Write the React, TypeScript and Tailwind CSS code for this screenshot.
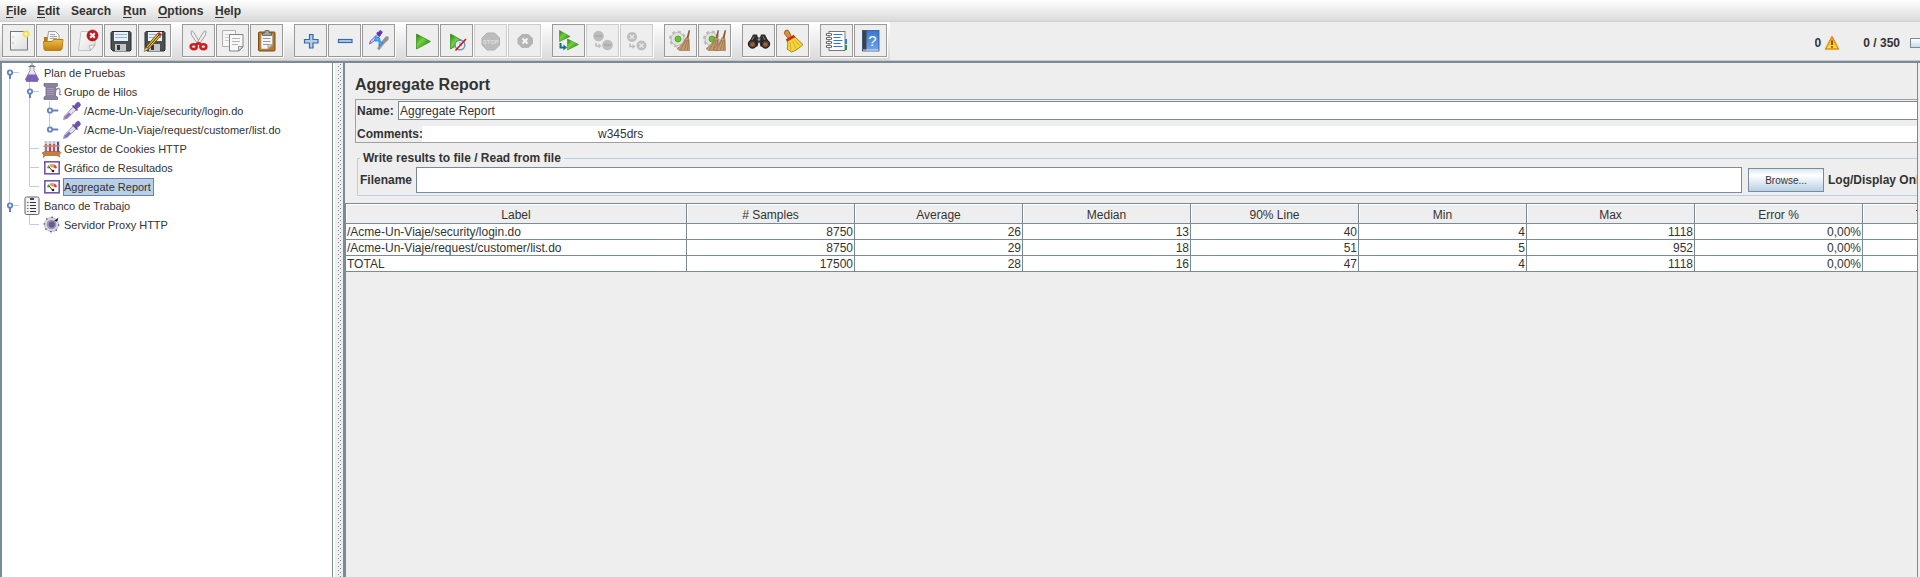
import type { ReactNode } from 'react';

function Glyph({ children }: { children: ReactNode }) {
  return (
    <svg className="block h-[25px] w-[25px]" viewBox="0 0 25 25" aria-hidden="true">
      {children}
    </svg>
  );
}

function Defs() {
  return (
    <svg width="0" height="0" className="absolute" aria-hidden="true">
      <defs>
        <linearGradient id="green" x1="0" y1="0" x2="1" y2="1">
          <stop offset="0" stopColor="#1f7d10" />
          <stop offset="0.4" stopColor="#6fd437" />
          <stop offset="1" stopColor="#176b0c" />
        </linearGradient>
        <linearGradient id="folder" x1="0" y1="0" x2="0" y2="1">
          <stop offset="0" stopColor="#f0bd43" />
          <stop offset="1" stopColor="#c17d11" />
        </linearGradient>
        <linearGradient id="page" x1="0" y1="0" x2="1" y2="1">
          <stop offset="0" stopColor="#ffffff" />
          <stop offset="1" stopColor="#dddddd" />
        </linearGradient>
        <linearGradient id="book" x1="0" y1="0" x2="0" y2="1">
          <stop offset="0" stopColor="#3a78cf" />
          <stop offset="1" stopColor="#6fa5ea" />
        </linearGradient>
        <radialGradient id="glow">
          <stop offset="0" stopColor="#fffde0" />
          <stop offset="0.5" stopColor="#f7e15a" />
          <stop offset="1" stopColor="#f7e15a" stopOpacity="0" />
        </radialGradient>
        <linearGradient id="warn" x1="0" y1="0" x2="0" y2="1">
          <stop offset="0" stopColor="#f59a1c" />
          <stop offset="1" stopColor="#ffea3a" />
        </linearGradient>
      </defs>
    </svg>
  );
}

function Floppy() {
  return (
    <>
      <path d="M4 3.5h18l1 1v17.5l-1 1H5l-2-2V4.5z" fill="#4b4f52" stroke="#2b2e30" />
      <rect x="6" y="4" width="14" height="9" fill="#e9f1f8" />
      <path d="M7 6.500h12M7 9.500h12" stroke="#8fb2d6" />
      <rect x="7" y="16" width="11" height="7" fill="#c4c6c7" />
      <rect x="9" y="17" width="3" height="5" fill="#34383a" />
    </>
  );
}

function Gear() {
  return (
    <>
      <circle cx="9.5" cy="11" r="7" fill="none" stroke="#bdbdbd" strokeWidth="3" strokeDasharray="3 2.5" />
      <circle cx="9.5" cy="11" r="6.5" fill="#e2e2e2" stroke="#b0b0b0" strokeWidth="0.8" />
      <circle cx="10" cy="11" r="3" fill="#62c62c" stroke="#4b9a20" strokeWidth="0.8" />
    </>
  );
}

function Straw() {
  return (
    <>
      <path d="M20.7 2l1.3.5-1.5 8-2-.5z" fill="#8a5a33" />
      <path d="M18 9.500l3 1 .5 12H11.500l-2.500-2c4-2 7-6 9-11z" fill="#c39a6d" stroke="#94693f" strokeWidth="0.6" />
      <path d="M18 12l-5.500 9.500M19.300 12l-3 10M20.500 12l-1 10" stroke="#8d6540" strokeWidth="0.6" />
    </>
  );
}

const icons: Record<string, ReactNode> = {
  New: (
    <>
      <rect x="4.5" y="3.5" width="17" height="18.5" fill="url(#page)" stroke="#777" />
      <path d="M7 8.500v1M7 14.500v1" stroke="#888" />
      <circle cx="20" cy="6" r="4.5" fill="url(#glow)" />
      <circle cx="20" cy="6" r="2.5" fill="none" stroke="#eedb55" />
    </>
  ),
  Open: (
    <>
      <path d="M4 12V9h4l1.500 2h12v4H4z" fill="#b8770f" />
      <path d="M8.500 3.500h7l3.500 3.500v7H7z" fill="#f6f6f6" stroke="#888" strokeWidth="0.8" />
      <path d="M10 6.500h5M10 8.500h7M10 10.500h7" stroke="#a5a5a5" />
      <path d="M3.500 13.500H12l1.500-2H23l-1 9.500-1.500 1.500H5L4 21.500z" fill="url(#folder)" stroke="#ad6f0c" strokeWidth="0.8" />
    </>
  ),
  Close: (
    <>
      <path d="M7 3.500h14V17l-4.500 5.500H4.500z" fill="url(#page)" stroke="#c4c4c4" />
      <path d="M21 17l-5.500.5 1 5z" fill="#fff" stroke="#999" strokeWidth="0.7" />
      <circle cx="18.5" cy="7.5" r="5.5" fill="#c4161c" stroke="#8f0b10" strokeWidth="0.6" />
      <path d="M16.200 5.200l4.600 4.600M20.800 5.200l-4.600 4.600" stroke="#fff" strokeWidth="2" />
    </>
  ),
  Save: <Floppy />,
  'Save As': (
    <>
      <Floppy />
      <path d="M4 19L15.500 5.500l3 2.500L7 21z" fill="#f3c32d" stroke="#4a390c" strokeWidth="0.8" />
      <path d="M5.500 20L17 6.800" stroke="#3a2b08" />
      <path d="M15.500 5.500l1.500-1.500 3 2.500-1.500 1.700z" fill="#c9262d" />
      <path d="M2 23.500l2-4.500 3 2z" fill="#e8cf9a" stroke="#5a450c" strokeWidth="0.5" />
    </>
  ),
  Cut: (
    <>
      <path d="M5 3.500c1-1 2-.5 2.500.5l7 11.500-2.500 1L5.500 7z" fill="#ededed" stroke="#8b8b8b" strokeWidth="0.8" />
      <path d="M20 3.500c-1-1-2-.5-2.500.5l-7 11.500 2.500 1L19.500 7z" fill="#ededed" stroke="#8b8b8b" strokeWidth="0.8" />
      <ellipse cx="7.7" cy="18.7" rx="3" ry="2.4" fill="none" stroke="#d8191d" strokeWidth="2.6" />
      <ellipse cx="17.300" cy="18.7" rx="3" ry="2.4" fill="none" stroke="#d8191d" strokeWidth="2.6" />
      <path d="M9.500 17l3-2 3 2" fill="none" stroke="#d8191d" strokeWidth="2.4" />
    </>
  ),
  Copy: (
    <>
      <path d="M2.500 2.500h13v16h-13z" fill="#f6f6f6" stroke="#b0b0b0" />
      <path d="M5 6.500h8M5 9.500h5M5 12.500h4" stroke="#ccc" />
      <path d="M9.500 6.500h13.500V19l-4 4H9.500z" fill="#f8f8f8" stroke="#858585" />
      <path d="M12 10.500h8M12 13.500h8M12 16.500h6" stroke="#b5b5b5" />
      <path d="M23 18.500h-4.500V23z" fill="#ddd" stroke="#858585" strokeWidth="0.8" />
    </>
  ),
  Paste: (
    <>
      <rect x="4.5" y="4" width="16.5" height="19" rx="1" fill="#b8782a" stroke="#7c4a10" />
      <path d="M7 6.500h11.500v10.500l-4 4H7z" fill="#f5f5f5" stroke="#999" strokeWidth="0.6" />
      <path d="M9 10.500h7.500M9 13.500h7.500M9 16.500h5" stroke="#999" />
      <path d="M8.500 7.500V5h2l.7-2.500h3.600L15.500 5h2v2.500z" fill="#a2a49c" stroke="#55574f" strokeWidth="0.8" />
      <path d="M18.500 16.500h-4.500V21z" fill="#ccc" stroke="#888" strokeWidth="0.6" />
    </>
  ),
  'Expand All': (
    <path d="M11.500 6.500h3.500v5h5v3.500h-5v5h-3.500v-5h-5v-3.500h5z" fill="#b3cdea" stroke="#3669a8" strokeWidth="1.2" />
  ),
  'Collapse All': (
    <rect x="6.5" y="11.5" width="13.5" height="3" fill="#b3cdea" stroke="#3669a8" strokeWidth="1.2" />
  ),
  Toggle: (
    <>
      <path d="M13 22l-1.500-1.500 3.500-6 3-3.500 2-2.500 2.500.5-.5 3-3.500 3z" fill="#8e8e8e" stroke="#a8a8a8" />
      <path d="M3.500 16l1-3L11 6.500l2.500 2L6 14.500z" fill="#d8cdf0" stroke="#6a4bb0" strokeWidth="0.9" />
      <path d="M11 4.500l3 3.500" stroke="#5d2fb0" strokeWidth="2" />
      <path d="M12 6l1.500-3c1-1 3 .5 2.500 1.500l-2 3z" fill="#6a35c0" stroke="#5d2fb0" />
      <path d="M9.500 8.500l-1 4.500h4.500v5l4-3-2.500-1-1-4z" fill="#42b4fa" stroke="#1c7fe0" strokeWidth="0.8" />
    </>
  ),
  Start: <path d="M6.500 6v15L20.500 13.500z" fill="url(#green)" stroke="#3f8f25" strokeWidth="0.8" />,
  'Start no pauses': (
    <>
      <path d="M6.500 6v15L20 13.500z" fill="url(#green)" stroke="#3f8f25" strokeWidth="0.8" />
      <circle cx="16" cy="17" r="4.8" fill="#eef4fb" stroke="#6c97b8" strokeWidth="1.4" />
      <path d="M16 14v3l2 1" fill="none" stroke="#6c97b8" />
      <path d="M11.500 22.500L22 11" stroke="#d01616" strokeWidth="1.6" />
    </>
  ),
  Stop: (
    <>
      <path d="M9 5h7.500l5 5v7l-5 5H9l-5-5v-7z" fill="#bcbcbc" stroke="#b0b0b0" />
      <text x="12.750" y="16" textAnchor="middle" fontFamily="Liberation Sans, sans-serif" fontWeight="bold" fontSize="6" fill="#dedede">STOP</text>
    </>
  ),
  Shutdown: (
    <>
      <path d="M10 6h6.500l4.500 4.500v5L16.500 20H10l-4.500-4.500v-5z" fill="#b4b4b4" />
      <path d="M10.500 10.500l5 5M15.500 10.500l-5 5" stroke="#f3f3f3" strokeWidth="2.200" />
    </>
  ),
  'Remote Start All': (
    <>
      <path d="M3.500 2.500v11L14 8.500z" fill="url(#green)" stroke="#3f8f25" strokeWidth="0.6" />
      <path d="M11.500 11v11L22.500 16.500z" fill="url(#green)" stroke="#3f8f25" strokeWidth="0.6" />
      <path d="M4.500 15v4.500h3.500" fill="none" stroke="#14717f" strokeWidth="2" />
      <path d="M7.500 16.500l3.500 3-3.500 3z" fill="#14717f" />
    </>
  ),
  'Remote Stop All': (
    <>
      <circle cx="8.5" cy="8" r="5.300" fill="#bdbdbd" />
      <path d="M5 8h7" stroke="#adadad" strokeWidth="2" />
      <circle cx="17.5" cy="17" r="5.300" fill="#bdbdbd" />
      <path d="M14 17h7" stroke="#adadad" strokeWidth="2" />
      <path d="M6 15v3h3" fill="none" stroke="#bdbdbd" strokeWidth="1.600" />
      <path d="M8.500 15.500l3 2.500-3 2.500z" fill="#bdbdbd" />
    </>
  ),
  'Remote Shutdown All': (
    <>
      <circle cx="8" cy="9" r="5" fill="#bdbdbd" />
      <path d="M6 7l4 4M10 7l-4 4" stroke="#e8e8e8" strokeWidth="1.400" />
      <circle cx="17.5" cy="17.5" r="5" fill="#bdbdbd" />
      <path d="M15.500 15.500l4 4M19.500 15.500l-4 4" stroke="#e8e8e8" strokeWidth="1.400" />
      <path d="M6 15.500v3h3" fill="none" stroke="#bdbdbd" strokeWidth="1.600" />
      <path d="M8.500 16l3 2.500-3 2.500z" fill="#bdbdbd" />
    </>
  ),
  Clear: (
    <>
      <Gear />
      <Straw />
    </>
  ),
  'Clear All': (
    <>
      <Gear />
      <g transform="translate(-5 0)">
        <Straw />
      </g>
      <g transform="translate(2 0)">
        <Straw />
      </g>
    </>
  ),
  Search: (
    <>
      <path d="M7 6.500h4l1 3h2l1-3h4l4.500 9-1 3h-8l-1-4h-1l-1 4h-8l-1-3z" fill="#2f2f2f" />
      <circle cx="6.5" cy="16" r="4.200" fill="#3a3a3a" stroke="#161616" />
      <circle cx="19.5" cy="16" r="4.200" fill="#3a3a3a" stroke="#161616" />
      <circle cx="6.5" cy="16.5" r="2.300" fill="#a65a32" />
      <circle cx="19.5" cy="16.5" r="2.300" fill="#a65a32" />
      <path d="M8 8.500l-2 3.500M17 8.500l2 3.500" stroke="#8a8a8a" />
      <circle cx="13" cy="11.5" r="1.300" fill="#9a9a9a" />
    </>
  ),
  'Reset Search': (
    <>
      <path d="M5 3c1.500-1.500 3.500-1 4 .5l2.500 5.500-3 1.500L5 6.500c-.8-1-.8-2.500 0-3.500z" fill="#d9922f" stroke="#7e4a0e" strokeWidth="0.8" />
      <path d="M7 12.500l7-4.500 9 8.500c-3.500 3.500-7 6-11.500 7.500L7 21c1-3 1-5.500 0-8.500z" fill="#f4d63a" stroke="#9c7a10" strokeWidth="0.9" />
      <path d="M6.500 12.500l8-4.500" stroke="#d02a1c" strokeWidth="2.600" />
      <path d="M10 14l1 8M12.500 13l3.500 7.500M15 12l4.500 6" stroke="#c9a425" strokeWidth="0.8" />
    </>
  ),
  'Function Helper': (
    <>
      <rect x="20" y="11" width="3" height="5" fill="#2f7fe8" />
      <rect x="20" y="17" width="3" height="5" fill="#1f9a3c" />
      <rect x="5" y="3.5" width="16" height="19" fill="#fff" stroke="#777" />
      <path d="M9.500 6.500h9M9.500 9.500h7M9.500 12.500h9M9.500 15.500h7M9.500 18.500h9" stroke="#2f74e0" />
      <path d="M3 6.500h4M3 10.500h4M3 14.500h4M3 18.500h4" stroke="#555" strokeWidth="2.400" strokeLinecap="round" />
      <path d="M3 6.500h4M3 10.500h4M3 14.500h4M3 18.500h4" stroke="#fff" strokeWidth="1.200" />
    </>
  ),
  Help: (
    <>
      <rect x="4.5" y="2.5" width="16.5" height="20.5" fill="url(#book)" stroke="#2a5597" strokeWidth="0.8" />
      <rect x="4.5" y="2.5" width="4" height="20.5" fill="#3e4247" />
      <path d="M5 22h15.500" stroke="#e8e8e8" />
      <text x="14.5" y="18" textAnchor="middle" fontFamily="Liberation Sans, sans-serif" fontSize="15" fill="#fff">?</text>
    </>
  ),
};

const toolGroups: string[][] = [
  ['New', 'Open', 'Close', 'Save', 'Save As'],
  ['Cut', 'Copy', 'Paste'],
  ['Expand All', 'Collapse All', 'Toggle'],
  ['Start', 'Start no pauses', 'Stop', 'Shutdown'],
  ['Remote Start All', 'Remote Stop All', 'Remote Shutdown All'],
  ['Clear', 'Clear All'],
  ['Search', 'Reset Search'],
  ['Function Helper', 'Help'],
];
const disabledTools = ['Stop', 'Shutdown', 'Remote Stop All', 'Remote Shutdown All'];

function ToolButton({ name }: { name: string }) {
  const disabled = disabledTools.includes(name);
  return (
    <button
      type="button"
      aria-label={name}
      disabled={disabled}
      className="flex h-[34px] w-[34px] items-center justify-center border-r border-b border-white bg-white"
    >
      <span
        className={
          'flex h-[33px] w-[33px] items-center justify-center border bg-[#eeeeee] ' +
          (disabled ? 'border-[#cccccc]' : 'border-[#999999]')
        }
      >
        <Glyph>{icons[name]}</Glyph>
      </span>
    </button>
  );
}

function MenuBar() {
  const items = [
    { label: 'File', key: true, w: 'w-[31px]' },
    { label: 'Edit', key: true, w: 'w-[34px]' },
    { label: 'Search', key: false, w: 'w-[52px]' },
    { label: 'Run', key: true, w: 'w-[35px]' },
    { label: 'Options', key: true, w: 'w-[57px]' },
    { label: 'Help', key: true, w: 'w-[40px]' },
  ];
  return (
    <nav className="flex h-[22px] items-center border-b border-[#d0d0d0] bg-linear-to-b from-white to-[#dadada] pl-[6px]">
      {items.map((m) => (
        <button key={m.label} type="button" className={'text-left text-[12px] leading-[16px] font-bold ' + m.w}>
          {m.key ? <span className="underline underline-offset-2">{m.label[0]}</span> : m.label[0]}
          {m.label.slice(1)}
        </button>
      ))}
    </nav>
  );
}

function ToolBar() {
  return (
    <div className="flex h-[39px] items-stretch border-b border-[#c8c8c8] bg-[#eeeeee]">
      <div className="flex gap-[10px] bg-linear-to-b from-white to-[#dadada] pt-[2px] pr-[2px] pl-[2px]">
        {toolGroups.map((group) => (
          <div key={group[0]} className="flex">
            {group.map((name) => (
              <ToolButton key={name} name={name} />
            ))}
          </div>
        ))}
      </div>
      <div className="ml-auto flex items-center overflow-hidden pt-[3px] text-[12px] font-bold">
        <span>0</span>
        <svg className="ml-[3px] h-[16px] w-[16px]" viewBox="0 0 16 16" aria-hidden="true">
          <path d="M8 1.500l6.500 12.500h-13z" fill="url(#warn)" stroke="#e08a1a" strokeWidth="1.400" strokeLinejoin="round" />
          <path d="M8 5.500v4.500" stroke="#9a4a0a" strokeWidth="1.800" />
          <circle cx="8" cy="12" r="1" fill="#9a4a0a" />
        </svg>
        <span className="ml-[23px]">0 / 350</span>
        <span className="ml-[10px] h-[10px] w-[10px] border border-r-0 border-[#7a8a99] bg-linear-to-b from-white to-[#c8d9ea]" />
      </div>
    </div>
  );
}

type Cell = 'open' | 'openLast' | 'closed' | 'closedLast' | 'line' | 'tee' | 'elbow' | 'blank' | 'openFirst';

function Branch({ kind }: { kind: Cell }) {
  const up = kind !== 'blank' && kind !== 'openFirst';
  const down = kind !== 'blank' && kind !== 'elbow' && kind !== 'openLast' && kind !== 'closedLast';
  const across = kind !== 'blank' && kind !== 'line';
  const open = kind.startsWith('open');
  const closed = kind.startsWith('closed');
  return (
    <svg className="h-[19px] w-[20px] shrink-0" viewBox="0 0 20 19" aria-hidden="true">
      {up && <path d="M7.500 0v9" stroke="#b8cfe5" />}
      {down && <path d="M7.500 9v10" stroke="#b8cfe5" />}
      {across && <path d="M7.500 9.500H17" stroke="#b8cfe5" />}
      {(open || closed) && (
        <>
          <path d={open ? 'M8 11v5' : 'M10 9.500h6'} stroke="#6382bf" strokeWidth="2" />
          <circle cx="8" cy="9.5" r="2.200" fill="#fff" stroke="#6382bf" strokeWidth="1.800" />
        </>
      )}
    </svg>
  );
}

const treeIcons: Record<string, ReactNode> = {
  flask: (
    <>
      <path d="M8 2.500h4v5l4.500 8.500-1 2.500H4.500l-1-2.500L8 7.500z" fill="#e9e6f2" stroke="#8f8aa5" strokeWidth="0.9" />
      <path d="M6 11.500h8l2.500 5-1 2H4.500l-1-2z" fill="#7b5fb8" />
      <path d="M6.500 3.500h7" stroke="#777" />
      <circle cx="10" cy="1" r="1" fill="#a9a4b9" />
    </>
  ),
  spool: (
    <>
      <path d="M2 1.500h13.500v2.500l-2 1v9l2 1v2.500H2V15l2-1V5L2 4z" fill="#8a819c" stroke="#6c6480" strokeWidth="0.7" />
      <path d="M5 6.500h7M5 8.500h7M5 10.500h7M5 12.500h7" stroke="#aba2bf" strokeWidth="0.8" />
      <path d="M13.500 10c.5-4.500 4.500-4.500 4.500-1.500 0 2.500-1.500 5 1.500 4" fill="none" stroke="#8a819c" strokeWidth="1.200" />
    </>
  ),
  dropper: (
    <>
      <path d="M1.500 18.500l1-3.500 9-9.500 3 3-9.500 9z" fill="#e2e0ea" stroke="#8c87a0" strokeWidth="0.8" />
      <path d="M2 18l1-2.500 4-4 2 2-4 3.800z" fill="#8a6cc4" />
      <path d="M10.500 4.500l5 5" stroke="#5f4694" strokeWidth="1.600" />
      <path d="M12 5.500l2.500-3.500c1.500-2 5 .5 3.500 3l-3.500 3z" fill="#7350b4" stroke="#5f4694" strokeWidth="0.7" />
    </>
  ),
  tubes: (
    <>
      <path d="M4 2v12M8 2v12M12 2v12M16 2v12" stroke="#c9c3d8" strokeWidth="3" />
      <path d="M4 5v8" stroke="#8c79b8" strokeWidth="2" />
      <path d="M8 5v8" stroke="#cc3355" strokeWidth="2" />
      <path d="M12 5v8" stroke="#b04a9a" strokeWidth="2" />
      <path d="M16 3v10" stroke="#4a4fc4" strokeWidth="2" />
      <path d="M1 7.500l2-1.500h15.500l-1.500 2H1z" fill="#cf8a45" fillOpacity="0.8" />
      <path d="M0 14l3-1.500h15l1 1-2 2.500 1 2-3-1.500H3.500L1 18.500l1-2.500z" fill="#c97e38" stroke="#96571c" strokeWidth="0.6" />
    </>
  ),
  gauge: (
    <>
      <rect x="2.8" y="3.800" width="14.400" height="12" fill="#fff" stroke="#7558ae" strokeWidth="1.600" />
      <path d="M5 10c.3-1.500 1-2.300 2-3l1 2-1.300 1.500z" fill="#3fae5a" />
      <path d="M7.500 6.500c1.500-.8 3.500-.8 5 0L11.500 9.500H9z" fill="#f59a4c" />
      <path d="M12.500 6.500c1.500.8 2.200 2 2.500 3.500l-2 .5-1.500-1.500z" fill="#e0402c" />
      <path d="M10.500 13L7 9" stroke="#333" />
      <circle cx="11" cy="13" r="1.300" fill="#222" />
    </>
  ),
  bench: (
    <>
      <rect x="3" y="1" width="14" height="17.500" rx="1.500" fill="#f4f4f6" stroke="#66636f" />
      <path d="M8 3h4" stroke="#444" strokeWidth="2" />
      <path d="M8 6.500h6M8 9.500h6M8 12.500h6M8 15.500h6" stroke="#333" strokeWidth="1.200" />
      <path d="M5 9.500h1.500M5 12.500h1.500M5 15.500h1.500" stroke="#3d8c4a" strokeWidth="1.200" />
      <path d="M5 6.500h1.500" stroke="#555" strokeWidth="1.200" />
    </>
  ),
  proxy: (
    <>
      <circle cx="9.5" cy="9.5" r="7" fill="#dcd8e8" stroke="#aaa4bb" strokeWidth="0.7" />
      <circle cx="9.5" cy="9.5" r="7.300" fill="none" stroke="#26232c" strokeWidth="1.200" strokeDasharray="1.200 4.500" />
      <circle cx="9.5" cy="9.5" r="4.800" fill="#9a90b8" />
      <circle cx="9.800" cy="9.5" r="3" fill="#675c88" />
      <path d="M12 6l4.500-3.500-1.500 4z" fill="#222" />
    </>
  ),
};

const tree: { cells: Cell[]; icon: string; label: string; selected?: boolean }[] = [
  { cells: ['openFirst'], icon: 'flask', label: 'Plan de Pruebas' },
  { cells: ['line', 'open'], icon: 'spool', label: 'Grupo de Hilos' },
  { cells: ['line', 'line', 'closed'], icon: 'dropper', label: '/Acme-Un-Viaje/security/login.do' },
  { cells: ['line', 'line', 'closedLast'], icon: 'dropper', label: '/Acme-Un-Viaje/request/customer/list.do' },
  { cells: ['line', 'tee'], icon: 'tubes', label: 'Gestor de Cookies HTTP' },
  { cells: ['line', 'tee'], icon: 'gauge', label: 'Gráfico de Resultados' },
  { cells: ['line', 'elbow'], icon: 'gauge', label: 'Aggregate Report', selected: true },
  { cells: ['openLast'], icon: 'bench', label: 'Banco de Trabajo' },
  { cells: ['blank', 'elbow'], icon: 'proxy', label: 'Servidor Proxy HTTP' },
];

function TreePanel() {
  return (
    <ul
      role="tree"
      aria-label="Plan"
      className="w-[333px] shrink-0 border-r border-l-2 border-[#7a8a99] bg-white text-[11px] leading-[16px]"
    >
      {tree.map((row) => (
        <li key={row.label} role="treeitem" aria-selected={!!row.selected} className="flex h-[19px] items-center">
          {row.cells.map((c, i) => (
            <Branch key={i} kind={c} />
          ))}
          <svg className="h-[19px] w-[20px] shrink-0" viewBox="0 0 20 19" aria-hidden="true">
            {treeIcons[row.icon]}
          </svg>
          <span
            className={
              'ml-px border pr-[2px] whitespace-nowrap ' +
              (row.selected ? 'border-[#6382bf] bg-[#b8cfe5]' : 'border-transparent')
            }
          >
            {row.label}
          </span>
        </li>
      ))}
    </ul>
  );
}

function Splitter() {
  return (
    <div className="flex w-[10px] shrink-0 justify-center border-l-2 border-white bg-[#eeeeee]">
      <svg className="h-full w-[4px]" aria-hidden="true">
        <defs>
          <pattern id="bumps" width="4" height="4" patternUnits="userSpaceOnUse">
            <rect x="0" y="2" width="1" height="1" fill="#fff" />
            <rect x="1" y="3" width="1" height="1" fill="#7a8a99" />
            <rect x="2" y="0" width="1" height="1" fill="#fff" />
            <rect x="3" y="1" width="1" height="1" fill="#7a8a99" />
          </pattern>
        </defs>
        <rect width="4" height="100%" fill="url(#bumps)" />
      </svg>
    </div>
  );
}

const columns = ['Label', '# Samples', 'Average', 'Median', '90% Line', 'Min', 'Max', 'Error %', 'Throughput'];
const rows = [
  ['/Acme-Un-Viaje/security/login.do', '8750', '26', '13', '40', '4', '1118', '0,00%', ''],
  ['/Acme-Un-Viaje/request/customer/list.do', '8750', '29', '18', '51', '5', '952', '0,00%', ''],
  ['TOTAL', '17500', '28', '16', '47', '4', '1118', '0,00%', ''],
];

function ResultsTable() {
  return (
    <div className="flex-1 overflow-hidden border-t border-l border-[#7a8a99]">
      <table className="w-[1685px] table-fixed border-separate border-spacing-0 text-[12px] leading-[14px]">
        <colgroup>
          {columns.map((c, i) => (
            <col key={c} className={i === 0 ? 'w-[341px]' : 'w-[168px]'} />
          ))}
        </colgroup>
        <thead>
          <tr>
            {columns.map((c) => (
              <th
                key={c}
                className="h-[20px] border-r border-b border-[#7a8a99] p-0 pt-[2px] font-normal shadow-[inset_1px_1px_0_#ffffff]"
              >
                {c}
              </th>
            ))}
          </tr>
        </thead>
        <tbody>
          {rows.map((r) => (
            <tr key={r[0]}>
              {r.map((v, i) => (
                <td
                  key={i}
                  className={
                    'h-[16px] border-r border-b border-[#7a8a99] bg-white px-px pt-px pb-0 whitespace-nowrap ' +
                    (i === 0 ? 'text-left' : 'text-right')
                  }
                >
                  {v}
                </td>
              ))}
            </tr>
          ))}
        </tbody>
      </table>
    </div>
  );
}

function ReportPanel() {
  return (
    <main className="mr-[2px] flex min-w-0 flex-1 flex-col overflow-hidden border-r border-l-2 border-[#7a8a99] text-[12px]">
      <h1 className="mt-[11px] ml-[10px] text-[16px] leading-[22px] font-bold">Aggregate Report</h1>

      <div className="mt-[3px] ml-[10px] border border-r-0 border-[#a0a0a0] pl-px">
        <div className="flex items-center pt-px">
          <label htmlFor="name" className="w-[41px] shrink-0 font-bold">
            Name:
          </label>
          <input
            id="name"
            defaultValue="Aggregate Report"
            className="h-[19px] min-w-0 flex-1 border border-r-0 border-[#7a8a99] bg-white px-px outline-none"
          />
        </div>
        <div className="mt-[6px] flex items-center">
          <label htmlFor="comments" className="w-[65px] shrink-0 leading-[16px] font-bold whitespace-nowrap">
            Comments:
          </label>
          <input
            id="comments"
            defaultValue="w345drs"
            className="h-[16px] min-w-0 flex-1 bg-white pl-[176px] outline-none"
          />
        </div>
      </div>

      <fieldset className="mt-[7px] ml-[12px] min-w-0 border border-r-0 border-[#b8cfe5] pt-px pb-[2px] pl-[2px]">
        <legend className="px-[3px] leading-[16px] font-bold">Write results to file / Read from file</legend>
        <div className="flex items-center">
          <label htmlFor="filename" className="w-[56px] shrink-0 font-bold">
            Filename
          </label>
          <input
            id="filename"
            className="h-[26px] min-w-0 flex-1 border border-[#7a8a99] bg-white px-px outline-none"
          />
          <button
            type="button"
            className="ml-[6px] h-[24px] w-[76px] border border-[#7a8a99] bg-linear-to-b from-[#dde8f3] via-white via-30% to-[#b8cfe5] text-[10px]"
          >
            Browse...
          </button>
          <span className="ml-[4px] w-[89px] overflow-hidden font-bold whitespace-nowrap">Log/Display Only:</span>
        </div>
      </fieldset>

      <div className="mt-[7px] flex flex-1 flex-col">
        <ResultsTable />
      </div>
    </main>
  );
}

export default function App() {
  return (
    <div className="flex min-h-screen flex-col bg-[#eeeeee] font-['Liberation_Sans',Arial,sans-serif] text-[#333333]">
      <Defs />
      <MenuBar />
      <ToolBar />
      <div className="flex flex-1 border-t-2 border-[#7a8a99]">
        <TreePanel />
        <Splitter />
        <ReportPanel />
      </div>
    </div>
  );
}
